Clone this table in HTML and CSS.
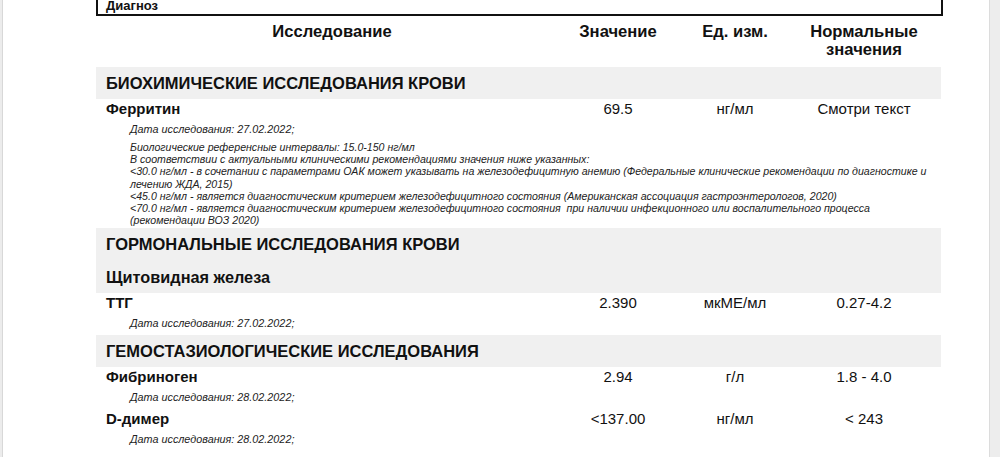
FILE: index.html
```html
<!DOCTYPE html>
<html lang="ru">
<head>
<meta charset="utf-8">
<title>Результаты исследований</title>
<link rel="stylesheet" href="styles.css">
</head>
<body>
<div class="strip-left"></div>
<main class="page">
  <div class="report">
    <div class="diag-box">Диагноз</div>

    <div class="grid head">
      <div class="c-name">Исследование</div>
      <div class="c-val">Значение</div>
      <div class="c-unit">Ед. изм.</div>
      <div class="c-norm">Нормальные<br>значения</div>
    </div>

    <div class="section">БИОХИМИЧЕСКИЕ ИССЛЕДОВАНИЯ КРОВИ</div>
    <div class="item">
      <div class="grid row">
        <div class="c-name name">Ферритин</div>
        <div class="c-val">69.5</div>
        <div class="c-unit">нг/мл</div>
        <div class="c-norm">Смотри текст</div>
      </div>
      <div class="date">Дата исследования: 27.02.2022;</div>
      <div class="note">
        <div class="nl">Биологические референсные интервалы: 15.0-150 нг/мл</div>
        <div class="nl">В соответствии с актуальными клиническими рекомендациями значения ниже указанных:</div>
        <div class="nl">&lt;30.0 нг/мл - в сочетании с параметрами ОАК может указывать на железодефицитную анемию (Федеральные клинические рекомендации по диагностике и</div>
        <div class="nl">лечению ЖДА, 2015)</div>
        <div class="nl">&lt;45.0 нг/мл - является диагностическим критерием железодефицитного состояния (Американская ассоциация гастроэнтерологов, 2020)</div>
        <div class="nl">&lt;70.0 нг/мл - является диагностическим критерием железодефицитного состояния  при наличии инфекционного или воспалительного процесса</div>
        <div class="nl">(рекомендации ВОЗ 2020)</div>
      </div>
    </div>

    <div class="section-group">
      <div class="section plain">ГОРМОНАЛЬНЫЕ ИССЛЕДОВАНИЯ КРОВИ</div>
      <div class="subsection">Щитовидная железа</div>
    </div>
    <div class="item">
      <div class="grid row">
        <div class="c-name name">ТТГ</div>
        <div class="c-val">2.390</div>
        <div class="c-unit">мкМЕ/мл</div>
        <div class="c-norm">0.27-4.2</div>
      </div>
      <div class="date">Дата исследования: 27.02.2022;</div>
    </div>

    <div class="section">ГЕМОСТАЗИОЛОГИЧЕСКИЕ ИССЛЕДОВАНИЯ</div>
    <div class="item">
      <div class="grid row">
        <div class="c-name name">Фибриноген</div>
        <div class="c-val">2.94</div>
        <div class="c-unit">г/л</div>
        <div class="c-norm">1.8 - 4.0</div>
      </div>
      <div class="date">Дата исследования: 28.02.2022;</div>
    </div>
    <div class="item">
      <div class="grid row">
        <div class="c-name name">D-димер</div>
        <div class="c-val">&lt;137.00</div>
        <div class="c-unit">нг/мл</div>
        <div class="c-norm">&lt; 243</div>
      </div>
      <div class="date">Дата исследования: 28.02.2022;</div>
    </div>
  </div>
</main>
<div class="strip-right"></div>
</body>
</html>
```

FILE: styles.css
```css
html, body {
  margin: 0;
  padding: 0;
  height: 100%;
  overflow: hidden;
}
body {
  display: flex;
  background: #fff;
  font-family: "Liberation Sans", Arial, sans-serif;
  color: #111;
}
.strip-left {
  width: 2px;
  flex: none;
  background: #ececec;
  border-right: 1px solid #d8d8d8;
}
.strip-right {
  width: 10px;
  flex: none;
  background: #ededed;
  border-left: 1px solid #dcdcdc;
}
.page {
  flex: 1;
  padding-left: 93px;
}
.report {
  width: 847px;
}
.diag-box {
  margin-top: -3px;
  border: 2px solid #111;
  padding: 0 10px 1px 8px;
  font-size: 13px;
  font-weight: bold;
  line-height: 14px;
}
.grid {
  display: grid;
  grid-template-columns: 472px 100px 134px 124px 1fr;
}
.c-val, .c-unit, .c-norm {
  text-align: center;
}
.head {
  padding-top: 7px;
  padding-bottom: 8px;
  font-size: 16.6px;
  font-weight: bold;
  line-height: 18px;
}
.head .c-name {
  text-align: center;
}
.section {
  margin-right: 2px;
  background: #f0f0f0;
  height: 32px;
  line-height: 32px;
  padding-left: 10px;
  font-size: 16.5px;
  font-weight: bold;
}
.section-group {
  margin-right: 2px;
  background: #f0f0f0;
}
.section.plain {
  margin-right: 0;
  height: 33px;
  line-height: 33px;
}
.subsection {
  height: 32px;
  line-height: 32px;
  padding-left: 10px;
  font-size: 16.3px;
  font-weight: bold;
}
.item {
  padding-bottom: 2px;
}
.row {
  height: 20px;
  line-height: 20px;
  font-size: 15px;
}
.name {
  padding-left: 10px;
  font-weight: bold;
}
.date {
  height: 20px;
  line-height: 20px;
  padding-left: 34px;
  font-size: 10.8px;
  font-style: italic;
  color: #222;
}
.note {
  margin-top: 2px;
  padding-left: 34px;
  font-size: 10.6px;
  font-style: italic;
  line-height: 12.2px;
  color: #222;
}
.nl {
  white-space: pre;
}
```
